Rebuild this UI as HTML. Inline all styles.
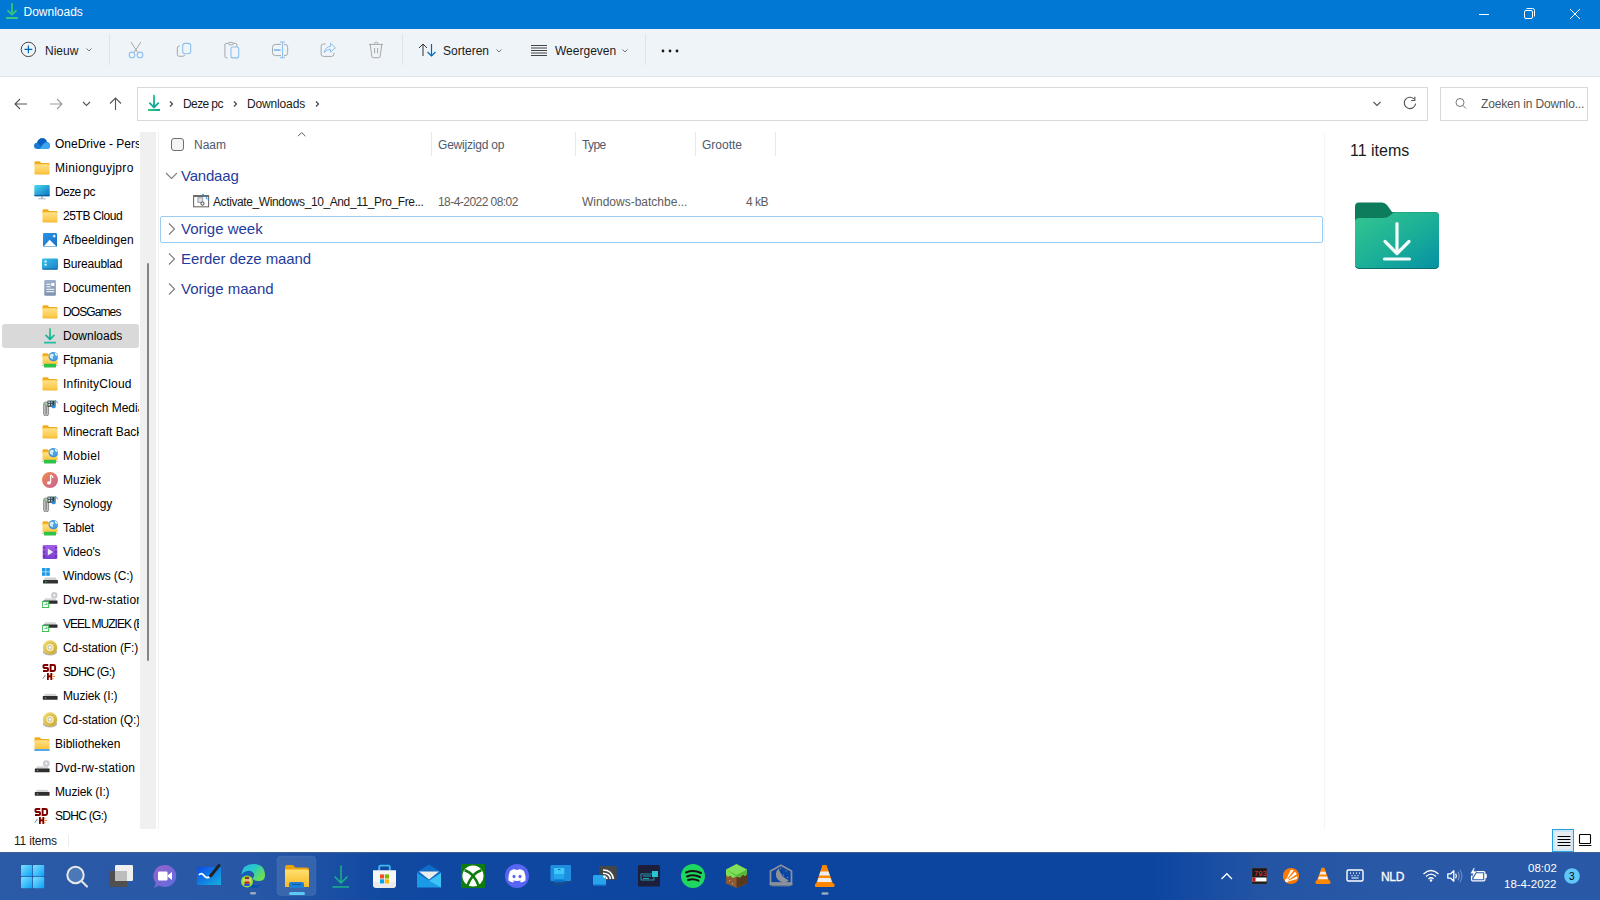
<!DOCTYPE html>
<html><head><meta charset="utf-8">
<style>
*{margin:0;padding:0;box-sizing:border-box}
html,body{width:1600px;height:900px;overflow:hidden;background:#fff;font-family:"Liberation Sans",sans-serif;color:#1a1a1a}
.a{position:absolute}
.t{position:absolute;white-space:nowrap;font-size:12px;line-height:16px}
svg{position:absolute;overflow:visible}
#title{left:0;top:0;width:1600px;height:29px;background:#0078d4}
#tool{left:0;top:29px;width:1600px;height:48px;background:#eff4f9;border-bottom:1px solid #e3e6ea}
.sep{position:absolute;width:1px;background:#dfe3e8}
.side .t{color:#1a1a1a}
</style></head>
<body>
<!-- TITLE BAR -->
<div id="title" class="a"></div>
<svg style="left:0;top:0" width="30" height="28"><path d="M12 3.8 V14.2 M8 10.8 L12 14.6 L16 10.8" stroke="#2fc27e" stroke-width="1.9" stroke-linecap="round" stroke-linejoin="round" fill="none"/><rect x="6" y="17" width="12" height="1.9" rx="0.3" fill="#33c97e"/></svg>
<div class="t" style="left:23.5px;top:4px;color:#fff">Downloads</div>
<svg style="left:1470px;top:0" width="130" height="28" fill="none" stroke="#fff" stroke-width="1">
 <path d="M9 14.5 H19"/>
 <rect x="54.5" y="10.5" width="8" height="8" rx="1.5"/>
 <path d="M56.5 8.5 H62.5 Q64.5 8.5 64.5 10.5 V16.5"/>
 <path d="M100 9 L110 19 M110 9 L100 19"/>
</svg>

<!-- TOOLBAR -->
<div id="tool" class="a"></div>
<svg style="left:0;top:28px" width="110" height="48" fill="none">
 <circle cx="28.4" cy="21.4" r="7.2" stroke="#444" stroke-width="1"/>
 <path d="M28.4 17.5 V25.3 M24.5 21.4 H32.3" stroke="#0067c0" stroke-width="1.2"/>
 <path d="M86.5 20.5 L89 23 L91.5 20.5" stroke="#777" stroke-width="1"/>
</svg>
<div class="t" style="left:45px;top:43px;color:#1a1a1a">Nieuw</div>
<div class="sep" style="left:109px;top:34px;height:31px"></div>
<svg style="left:120px;top:34px" width="280" height="32" fill="none" stroke-width="1">
 <g stroke="#a6a6a6"><path d="M11 8 L17.6 18.3 M20.8 8 L14.2 18.3"/></g>
 <g stroke="#8ec0ec" stroke-width="1.1"><circle cx="12" cy="20.9" r="2.8"/><circle cx="20" cy="20.9" r="2.8"/></g>
 <path d="M59.8 12 H59.3 Q57.3 12 57.3 14 V20.3 Q57.3 22.3 59.3 22.3 H62.3 Q64.5 22.3 64.8 20.8" stroke="#a6a6a6"/>
 <rect x="62.7" y="9.4" width="8" height="10.3" rx="2.5" stroke="#8ec0ec" stroke-width="1.1"/>
 <path d="M107.5 23.9 H106.5 Q104.9 23.9 104.9 22.3 V11 Q104.9 9.3 106.5 9.3 H108.3 M113.2 9.3 H115.2 Q116.9 9.3 116.9 11 V13" stroke="#a6a6a6"/>
 <rect x="108.5" y="8.4" width="4.6" height="2.4" rx="1.2" stroke="#a6a6a6"/>
 <rect x="111" y="13" width="7.7" height="10.9" rx="2" stroke="#8ec0ec" stroke-width="1.1"/>
 <path d="M161 10.4 H155.5 Q152.5 10.4 152.5 13.4 V18.6 Q152.5 21.6 155.5 21.6 H161 M164 10.4 H165 Q167.7 10.4 167.7 13.4 V18.6 Q167.7 21.6 165 21.6 H164" stroke="#a6a6a6"/>
 <path d="M162.5 8 V23.7 M160 8 H165 M160 23.7 H165" stroke="#8ec0ec" stroke-width="1.1"/>
 <rect x="154" y="15.1" width="6.6" height="1.9" fill="#8ec0ec"/>
 <path d="M205.5 10 H203.5 Q201.1 10 201.1 12.5 V20 Q201.1 22.4 203.5 22.4 H211.5 Q213.9 22.4 213.9 20 V18.8" stroke="#a6a6a6"/>
 <path d="M204.2 18.6 Q205.6 12.6 210.5 12.4 V9.2 L215.4 13.8 L210.5 18.3 V15.3 Q206.8 15.2 204.2 18.6 Z" stroke="#8ec0ec" stroke-linejoin="round"/>
 <path d="M249 10.4 H263 M254.5 10.4 V9.5 Q254.5 8.3 255.8 8.3 H256.5 Q257.8 8.3 257.8 9.5 V10.4 M250.2 10.4 L251.8 22.3 Q252 23.7 253.4 23.7 H258.6 Q260 23.7 260.2 22.3 L261.8 10.4 M254.6 14 V19.5 M257.6 14 V19.5" stroke="#a6a6a6"/>
</svg>
<div class="sep" style="left:402px;top:34px;height:31px"></div>
<svg style="left:410px;top:34px" width="240" height="32" fill="none" stroke-width="1">
 <path d="M13 22 V10 M9 14 L13 10 L17 14" stroke="#333"/>
 <path d="M21.5 10 V22 M17.5 18 L21.5 22 L25.5 18" stroke="#0067c0" stroke-width="1.2"/>
 <path d="M86.5 15.5 L89 18 L91.5 15.5" stroke="#777"/>
 <path d="M121 11.5 H137 M121 14 H137 M121 16.5 H137 M121 19 H137 M121 21.5 H137" stroke="#3a3a3a" stroke-width="0.95"/>
 <path d="M212.5 15.5 L215 18 L217.5 15.5" stroke="#777"/>
</svg>
<div class="t" style="left:443px;top:43px">Sorteren</div>
<div class="t" style="left:555px;top:43px">Weergeven</div>
<div class="sep" style="left:645px;top:34px;height:31px"></div>
<svg style="left:660px;top:47px" width="22" height="8" fill="#1a1a1a"><circle cx="3" cy="4" r="1.4"/><circle cx="10" cy="4" r="1.4"/><circle cx="17" cy="4" r="1.4"/></svg>

<!-- NAV / ADDRESS -->
<svg style="left:0;top:80px" width="135" height="40" fill="none" stroke-width="1.1">
 <path d="M15 24 H27 M20 19 L15 24 L20 29" stroke="#555"/>
 <path d="M50 24 H62 M57 19 L62 24 L57 29" stroke="#999"/>
 <path d="M83 22 L86.5 25.5 L90 22" stroke="#555"/>
 <path d="M115.5 30 V18 M110 23.5 L115.5 18 L121 23.5" stroke="#555"/>
</svg>
<div class="a" style="left:137px;top:87px;width:1291px;height:34px;border:1px solid #d9d9d9"></div>
<svg style="left:140px;top:87px" width="190" height="34" fill="none" stroke-width="1.2">
 <defs><linearGradient id="gDl2" gradientUnits="userSpaceOnUse" x1="0" y1="8" x2="0" y2="21"><stop offset="0" stop-color="#2ecc82"/><stop offset="1" stop-color="#0e9ea0"/></linearGradient><linearGradient id="gDl3" x1="0" y1="0" x2="1" y2="0"><stop offset="0" stop-color="#30cc80"/><stop offset="1" stop-color="#10a29c"/></linearGradient></defs>
 <path d="M14 8.6 V19.8 M9.8 16.2 L14 20.4 L18.2 16.2" stroke="url(#gDl2)" stroke-width="1.9" stroke-linecap="round" stroke-linejoin="round"/><rect x="8" y="22" width="12" height="1.9" rx="0.3" fill="url(#gDl3)" stroke="none"/>
 <path d="M30 14.5 L32.5 17 L30 19.5" stroke="#444"/>
 <path d="M94 14.5 L96.5 17 L94 19.5" stroke="#444"/>
 <path d="M176 14.5 L178.5 17 L176 19.5" stroke="#444"/>
</svg>
<div class="t" style="left:183px;top:96px;letter-spacing:-0.6px">Deze pc</div>
<div class="t" style="left:247px;top:96px;letter-spacing:-0.15px">Downloads</div>
<svg style="left:1360px;top:87px" width="70" height="34" fill="none" stroke-width="1.1">
 <path d="M13.5 15 L17 18.5 L20.5 15" stroke="#555"/>
 <path d="M55.6 16.6 A5.7 5.7 0 1 1 53.9 11.8" stroke="#555" stroke-width="1.1"/><path d="M54.8 9.8 V13.5 H51.2" stroke="#555" stroke-width="1.2" stroke-linejoin="miter"/>
</svg>
<div class="a" style="left:1440px;top:87px;width:148px;height:34px;border:1px solid #d9d9d9"></div>
<svg style="left:1440px;top:87px" width="40" height="34" fill="none" stroke="#777" stroke-width="1"><circle cx="20" cy="15.5" r="4"/><path d="M23 18.5 L26 21.5"/></svg>
<div class="t" style="left:1481px;top:96px;color:#555;letter-spacing:-0.15px">Zoeken in Downlo...</div>

<!-- SIDEBAR -->
<svg width="0" height="0" style="position:absolute">
<defs>
<linearGradient id="gFold" x1="0" y1="0" x2="0" y2="1"><stop offset="0" stop-color="#ffe38a"/><stop offset="1" stop-color="#fcc23b"/></linearGradient>
<linearGradient id="gMon" x1="0" y1="0" x2="1" y2="1"><stop offset="0" stop-color="#4adcef"/><stop offset="1" stop-color="#0a6fc2"/></linearGradient>
<linearGradient id="gDesk" x1="0" y1="0" x2="1" y2="1"><stop offset="0" stop-color="#35c4ee"/><stop offset="1" stop-color="#1a7fc8"/></linearGradient>
<linearGradient id="gPic" x1="0" y1="0" x2="1" y2="1"><stop offset="0" stop-color="#2b93e4"/><stop offset="1" stop-color="#1670c8"/></linearGradient>
<linearGradient id="gDoc" x1="0" y1="0" x2="0" y2="1"><stop offset="0" stop-color="#9db0c9"/><stop offset="1" stop-color="#7d91ae"/></linearGradient>
<linearGradient id="gMus" x1="0" y1="0" x2="1" y2="1"><stop offset="0" stop-color="#f08a4a"/><stop offset="1" stop-color="#c7609a"/></linearGradient>
<linearGradient id="gVid" x1="0" y1="0" x2="0" y2="1"><stop offset="0" stop-color="#a35ee8"/><stop offset="1" stop-color="#7a3fd0"/></linearGradient>
<linearGradient id="gDl" x1="0" y1="0" x2="0" y2="1"><stop offset="0" stop-color="#2fc887"/><stop offset="1" stop-color="#13b09a"/></linearGradient>
<linearGradient id="gCd" x1="0" y1="0" x2="1" y2="1"><stop offset="0" stop-color="#f3e37a"/><stop offset="1" stop-color="#c9a227"/></linearGradient>
<symbol id="i-folder" viewBox="0 0 16 16"><path d="M0.5 2.3 Q0.5 1.3 1.5 1.3 H5.6 L7.2 3 H14.5 Q15.5 3 15.5 4 V6 H0.5 Z" fill="#f1ad1e"/><path d="M0.5 4.2 H14.5 Q15.5 4.2 15.5 5.2 V13.3 Q15.5 14.3 14.5 14.3 H1.5 Q0.5 14.3 0.5 13.3 Z" fill="url(#gFold)"/><rect x="0.5" y="13.6" width="15" height="0.7" fill="#f0b32e"/></symbol>
<symbol id="i-lib" viewBox="0 0 16 16"><path d="M0.5 2.3 Q0.5 1.3 1.5 1.3 H5.6 L7.2 3 H14.5 Q15.5 3 15.5 4 V6 H0.5 Z" fill="#f1ad1e"/><path d="M0.5 4.2 H14.5 Q15.5 4.2 15.5 5.2 V13 H0.5 Z" fill="url(#gFold)"/><rect x="0.2" y="13.3" width="15.6" height="1.4" rx="0.6" fill="#1b8fe0"/></symbol>
<symbol id="i-cloud" viewBox="0 0 16 16"><path d="M3.8 13 Q0 13 0 9.8 Q0.1 7 3.1 6.8 Q4.2 2.2 8.6 2.3 Q12.2 2.5 13 6.1 Q16 6.5 16 9.7 Q15.9 13 12.6 13 Z" fill="#1a78d6"/><path d="M5.6 13 L9.6 7.9 Q11.4 6.1 13.4 6.5 Q16 7.1 16 9.9 Q15.9 13 12.6 13 Z" fill="#3ea6f0"/><path d="M3.1 6.8 Q4.2 2.2 8.6 2.3 Q11.6 2.5 12.7 5.6 Q10.4 5.7 9 7.4 L6 11 Q5.4 7.4 3.1 6.8 Z" fill="#0b5fc0"/></symbol>
<symbol id="i-pc" viewBox="0 0 16 16"><rect x="0.3" y="0.9" width="15.4" height="11.3" rx="1" fill="url(#gMon)"/><rect x="0.3" y="11.2" width="15.4" height="1" fill="#0b4f8f"/><rect x="7.2" y="12.2" width="1.6" height="2.3" fill="#9aa7b3"/><rect x="4.2" y="14.3" width="7.6" height="1" fill="#a9b4bf"/></symbol>
<symbol id="i-pic" viewBox="0 0 16 16"><rect x="1" y="1" width="14" height="14" rx="1.2" fill="url(#gPic)"/><path d="M1.6 14.4 L7.5 7.8 L14.6 14.4 Z" fill="#fff"/><path d="M12.2 2.6 V5.6 M10.7 4.1 H13.7" stroke="#fff" stroke-width="1"/></symbol>
<symbol id="i-desk" viewBox="0 0 16 16"><rect x="0" y="2.4" width="16" height="11" rx="1.3" fill="url(#gDesk)"/><rect x="0.5" y="12.6" width="15" height="1" fill="#0d5d98"/><rect x="2.6" y="4.6" width="2" height="1.8" fill="#fff"/><rect x="2.6" y="7.8" width="2" height="1.8" fill="#fff"/></symbol>
<symbol id="i-doc" viewBox="0 0 16 16"><rect x="2.3" y="0" width="11.6" height="15.7" rx="1.2" fill="url(#gDoc)"/><rect x="4.3" y="3.8" width="4.2" height="1" fill="#fff"/><rect x="9.3" y="3" width="3" height="3" fill="#fff"/><rect x="4.3" y="6.3" width="4.2" height="1" fill="#fff"/><rect x="4.3" y="8.8" width="8" height="1" fill="#fff"/><rect x="4.3" y="11.2" width="8" height="1" fill="#fff"/></symbol>
<symbol id="i-dl" viewBox="0 0 16 16"><path d="M8 1 V11 M4 7.4 L8 11.4 L12 7.4" stroke="url(#gDl)" stroke-width="1.8" stroke-linecap="round" stroke-linejoin="round" fill="none"/><rect x="2" y="13.8" width="12" height="1.8" rx="0.3" fill="#22c0a0"/></symbol>
<symbol id="i-net" viewBox="0 0 16 16"><path d="M0.5 2.3 Q0.5 1.3 1.5 1.3 H5.6 L7.2 3 H14.5 Q15.5 3 15.5 4 V6 H0.5 Z" fill="#f1ad1e"/><path d="M0.5 4.2 H15.5 V12.5 H0.5 Z" fill="url(#gFold)"/><rect x="0" y="13" width="16" height="0.8" fill="#b8bcc4"/><rect x="2" y="11.8" width="12" height="3.6" rx="0.5" fill="#2fc24a"/><circle cx="11.3" cy="4.6" r="4.7" fill="#4ba3e3"/><path d="M8.4 2.6 Q10 1.2 11.4 2.2 Q12.6 3.4 11 4.6 Q10.2 5.6 10.8 7.4 Q8.4 6.6 7.6 5 Q7.5 3.6 8.4 2.6 Z M12.8 0.6 Q15.2 1.6 15.8 4 Q14 4.2 13.2 3 Q12.6 1.8 12.8 0.6 Z" fill="#d8ecfa"/><path d="M7 5 A4.7 4.7 0 0 0 15.8 6" stroke="#2a78c0" stroke-width="0.6" fill="none"/></symbol>
<symbol id="i-remote" viewBox="0 0 16 16"><rect x="1.6" y="2" width="5" height="14" rx="2.3" fill="#c4c4c4" stroke="#6a6a6a" stroke-width="0.7"/><rect x="3.4" y="5" width="1.5" height="9.5" rx="0.7" fill="#8a8a8a"/><rect x="5.5" y="0.6" width="7.2" height="6.2" fill="#3a3a3a"/><rect x="6.3" y="1.4" width="1.7" height="1.7" fill="#9be8ff"/><rect x="8.8" y="1.4" width="1.7" height="1.7" fill="#5cc5f0"/><rect x="6.3" y="3.9" width="1.7" height="1.7" fill="#aef0c0"/><rect x="8.8" y="3.9" width="1.7" height="1.7" fill="#5cc5f0"/><path d="M13.3 0.4 V6.6" stroke="#2a8fe0" stroke-width="1"/><path d="M13.3 0.4 Q15.2 1.3 15.6 3.4" stroke="#2a8fe0" stroke-width="0.9" fill="none"/><ellipse cx="11.6" cy="6.8" rx="2.1" ry="1.5" fill="#2a8fe0"/><rect x="2.4" y="4" width="1.3" height="1.3" fill="#3c3"/></symbol>
<symbol id="i-music" viewBox="0 0 16 16"><circle cx="8" cy="8" r="8" fill="url(#gMus)"/><path d="M8.6 3.2 V10.5" stroke="#fff" stroke-width="1.3"/><path d="M8.6 3.2 Q10.8 3.8 11 6" stroke="#fff" stroke-width="1.2" fill="none"/><ellipse cx="6.9" cy="10.9" rx="2" ry="1.6" fill="#fff"/></symbol>
<symbol id="i-vid" viewBox="0 0 16 16"><rect x="0.7" y="1" width="14.6" height="14" rx="1.3" fill="url(#gVid)"/><rect x="1.5" y="3" width="1.3" height="1.3" fill="#3b1d6e"/><rect x="1.5" y="7.3" width="1.3" height="1.3" fill="#3b1d6e"/><rect x="1.5" y="11.5" width="1.3" height="1.3" fill="#3b1d6e"/><rect x="13.2" y="3" width="1.3" height="1.3" fill="#3b1d6e"/><rect x="13.2" y="7.3" width="1.3" height="1.3" fill="#3b1d6e"/><rect x="13.2" y="11.5" width="1.3" height="1.3" fill="#3b1d6e"/><path d="M5.8 4.5 L11.2 8 L5.8 11.5 Z" fill="#eee"/></symbol>
<symbol id="i-win" viewBox="0 0 16 16"><rect x="0" y="0" width="3.6" height="3.6" fill="#1e9be8"/><rect x="4.2" y="0" width="3.6" height="3.6" fill="#1e9be8"/><rect x="0" y="4.2" width="3.6" height="3.6" fill="#1e9be8"/><rect x="4.2" y="4.2" width="3.6" height="3.6" fill="#1e9be8"/><path d="M1.5 12.2 L3 9.5 H13.5 L15.2 12.2 Z" fill="#d0d0d0"/><rect x="1" y="12" width="15" height="3.6" rx="0.6" fill="#333"/><rect x="3.2" y="13.2" width="1.3" height="1.2" fill="#3c3"/></symbol>
<symbol id="i-dvdnet" viewBox="0 0 16 16"><circle cx="12.3" cy="3.2" r="3.2" fill="#c8ccd0"/><circle cx="12.3" cy="3.2" r="1" fill="#fff"/><path d="M1.5 8.8 L3.3 6.2 H13.2 L15 8.8 Z" fill="#d5d5d5"/><rect x="1.3" y="8.6" width="14.2" height="3.2" rx="0.5" fill="#2e2e2e"/><rect x="0.3" y="9.6" width="6.4" height="6" fill="#fff" stroke="#2eb84a" stroke-width="1"/><path d="M2 13.8 Q2.4 11.6 4.5 11.4 V10.6 L5.8 12 L4.5 13.3 V12.5 Q3 12.5 2 13.8 Z" fill="#2eb84a"/></symbol>
<symbol id="i-drvnet" viewBox="0 0 16 16"><path d="M1.5 8.8 L3.3 6.2 H13.2 L15 8.8 Z" fill="#d5d5d5"/><rect x="1.3" y="8.6" width="14.2" height="3.2" rx="0.5" fill="#2e2e2e"/><rect x="0.3" y="9.6" width="6.4" height="6" fill="#fff" stroke="#2eb84a" stroke-width="1"/><path d="M2 13.8 Q2.4 11.6 4.5 11.4 V10.6 L5.8 12 L4.5 13.3 V12.5 Q3 12.5 2 13.8 Z" fill="#2eb84a"/></symbol>
<symbol id="i-cd" viewBox="0 0 16 16"><ellipse cx="8" cy="12" rx="7.2" ry="3.4" fill="#b8b8b8"/><circle cx="8" cy="7.5" r="7.2" fill="url(#gCd)"/><circle cx="8" cy="7.5" r="4.2" fill="#f6eeb0" stroke="#caa83a" stroke-width="0.6"/><circle cx="8" cy="7.5" r="1.8" fill="#fff" stroke="#999" stroke-width="0.6"/></symbol>
<symbol id="i-sd" viewBox="0 0 16 16"><path d="M6.2 1 H2.4 Q1.5 1 1.5 2 V3.2 Q1.5 4 2.4 4 H5.2 Q6 4 6 4.8 V6.2 Q6 7 5.2 7 H1" stroke="#7d0000" stroke-width="1.9" fill="none"/><path d="M8.6 0.1 V8 M8.6 1 H11.6 Q13.1 1 13.1 2.5 V5.5 Q13.1 7 11.6 7 H8.6" stroke="#7d0000" stroke-width="1.9" fill="none"/><rect x="6.2" y="10" width="2.5" height="3.5" fill="#d8d050"/><path d="M5.9 9 V16 M9.3 9 V16 M5.9 12.3 H9.3" stroke="#7d0000" stroke-width="1.8"/><path d="M3 11.5 L1.7 13 L3.8 13.5 Z" fill="#d8d860"/><path d="M0.7 14.8 L3.5 10.8" stroke="#6a80b8" stroke-width="0.9"/><path d="M10.3 12.4 H13.2 M10.3 10.5 L11.6 10.2 M10.3 14.4 L11.6 14.7" stroke="#ff7010" stroke-width="0.9"/></symbol>
<symbol id="i-drv" viewBox="0 0 16 16"><path d="M1.5 8.3 L3.3 5.8 H13.2 L15 8.3 Z" fill="#d5d5d5"/><rect x="0.8" y="8" width="14.8" height="3.8" rx="0.6" fill="#2f2f2f"/><rect x="3" y="9.4" width="1.3" height="1.1" fill="#3c3"/></symbol>
<symbol id="i-dvd" viewBox="0 0 16 16"><circle cx="12.3" cy="3.6" r="3.4" fill="#c8ccd0"/><circle cx="12.3" cy="3.6" r="1.1" fill="#fff"/><path d="M1.5 8.8 L3.3 6.3 H13.2 L15 8.8 Z" fill="#d5d5d5"/><rect x="0.8" y="8.5" width="14.8" height="3.8" rx="0.6" fill="#2f2f2f"/><rect x="3" y="9.9" width="1.3" height="1.1" fill="#3c3"/></symbol>
</defs></svg>

<div class="a" style="left:0;top:132px;width:139px;height:697px;overflow:hidden;color:#000">
<div class="a" style="left:2px;top:192px;width:137px;height:24px;background:#d9d9d9;border-radius:3px"></div>
<svg style="left:34px;top:4px" width="16" height="16"><use href="#i-cloud"/></svg><div class="t" style="left:55px;top:0px;line-height:24px">OneDrive - Persoonlijk</div>
<svg style="left:34px;top:28px" width="16" height="16"><use href="#i-folder"/></svg><div class="t" style="left:55px;top:24px;line-height:24px;letter-spacing:0.3px">Minionguyjpro</div>
<svg style="left:34px;top:52px" width="16" height="16"><use href="#i-pc"/></svg><div class="t" style="left:55px;top:48px;line-height:24px;letter-spacing:-0.6px">Deze pc</div>
<svg style="left:42px;top:76px" width="16" height="16"><use href="#i-folder"/></svg><div class="t" style="left:63px;top:72px;line-height:24px;letter-spacing:-0.4px">25TB Cloud</div>
<svg style="left:42px;top:100px" width="16" height="16"><use href="#i-pic"/></svg><div class="t" style="left:63px;top:96px;line-height:24px;letter-spacing:0.05px">Afbeeldingen</div>
<svg style="left:42px;top:124px" width="16" height="16"><use href="#i-desk"/></svg><div class="t" style="left:63px;top:120px;line-height:24px;letter-spacing:-0.22px">Bureaublad</div>
<svg style="left:42px;top:148px" width="16" height="16"><use href="#i-doc"/></svg><div class="t" style="left:63px;top:144px;line-height:24px">Documenten</div>
<svg style="left:42px;top:172px" width="16" height="16"><use href="#i-folder"/></svg><div class="t" style="left:63px;top:168px;line-height:24px;letter-spacing:-0.9px">DOSGames</div>
<svg style="left:42px;top:196px" width="16" height="16"><use href="#i-dl"/></svg><div class="t" style="left:63px;top:192px;line-height:24px">Downloads</div>
<svg style="left:42px;top:220px" width="16" height="16"><use href="#i-net"/></svg><div class="t" style="left:63px;top:216px;line-height:24px">Ftpmania</div>
<svg style="left:42px;top:244px" width="16" height="16"><use href="#i-folder"/></svg><div class="t" style="left:63px;top:240px;line-height:24px;letter-spacing:0.2px">InfinityCloud</div>
<svg style="left:42px;top:268px" width="16" height="16"><use href="#i-remote"/></svg><div class="t" style="left:63px;top:264px;line-height:24px">Logitech Media Server</div>
<svg style="left:42px;top:292px" width="16" height="16"><use href="#i-folder"/></svg><div class="t" style="left:63px;top:288px;line-height:24px">Minecraft Backups</div>
<svg style="left:42px;top:316px" width="16" height="16"><use href="#i-net"/></svg><div class="t" style="left:63px;top:312px;line-height:24px;letter-spacing:0.3px">Mobiel</div>
<svg style="left:42px;top:340px" width="16" height="16"><use href="#i-music"/></svg><div class="t" style="left:63px;top:336px;line-height:24px">Muziek</div>
<svg style="left:42px;top:364px" width="16" height="16"><use href="#i-remote"/></svg><div class="t" style="left:63px;top:360px;line-height:24px">Synology</div>
<svg style="left:42px;top:388px" width="16" height="16"><use href="#i-net"/></svg><div class="t" style="left:63px;top:384px;line-height:24px;letter-spacing:-0.2px">Tablet</div>
<svg style="left:42px;top:412px" width="16" height="16"><use href="#i-vid"/></svg><div class="t" style="left:63px;top:408px;line-height:24px;letter-spacing:-0.2px">Video's</div>
<svg style="left:42px;top:436px" width="16" height="16"><use href="#i-win"/></svg><div class="t" style="left:63px;top:432px;line-height:24px;letter-spacing:-0.15px">Windows (C:)</div>
<svg style="left:42px;top:460px" width="16" height="16"><use href="#i-dvdnet"/></svg><div class="t" style="left:63px;top:456px;line-height:24px;letter-spacing:0.2px">Dvd-rw-station (D:)</div>
<svg style="left:42px;top:484px" width="16" height="16"><use href="#i-drvnet"/></svg><div class="t" style="left:63px;top:480px;line-height:24px;letter-spacing:-1.0px">VEEL MUZIEK (E:)</div>
<svg style="left:42px;top:508px" width="16" height="16"><use href="#i-cd"/></svg><div class="t" style="left:63px;top:504px;line-height:24px;letter-spacing:-0.1px">Cd-station (F:)</div>
<svg style="left:42px;top:532px" width="16" height="16"><use href="#i-sd"/></svg><div class="t" style="left:63px;top:528px;line-height:24px;letter-spacing:-0.72px">SDHC (G:)</div>
<svg style="left:42px;top:556px" width="16" height="16"><use href="#i-drv"/></svg><div class="t" style="left:63px;top:552px;line-height:24px;letter-spacing:-0.14px">Muziek (I:)</div>
<svg style="left:42px;top:580px" width="16" height="16"><use href="#i-cd"/></svg><div class="t" style="left:63px;top:576px;line-height:24px;letter-spacing:-0.1px">Cd-station (Q:)</div>
<svg style="left:34px;top:604px" width="16" height="16"><use href="#i-lib"/></svg><div class="t" style="left:55px;top:600px;line-height:24px">Bibliotheken</div>
<svg style="left:34px;top:628px" width="16" height="16"><use href="#i-dvd"/></svg><div class="t" style="left:55px;top:624px;line-height:24px;letter-spacing:0.2px">Dvd-rw-station (D:)</div>
<svg style="left:34px;top:652px" width="16" height="16"><use href="#i-drv"/></svg><div class="t" style="left:55px;top:648px;line-height:24px;letter-spacing:-0.14px">Muziek (I:)</div>
<svg style="left:34px;top:676px" width="16" height="16"><use href="#i-sd"/></svg><div class="t" style="left:55px;top:672px;line-height:24px;letter-spacing:-0.72px">SDHC (G:)</div>
</div>
<div class="a" style="left:140px;top:132px;width:16px;height:697px;background:#f0f0f0"></div>
<div class="a" style="left:147px;top:263px;width:2px;height:398px;background:#858585;border-radius:1px"></div>
<!-- MAIN LIST -->
<div class="a" style="left:158px;top:132px;width:1px;height:697px;background:#f2f2f2"></div>
<svg style="left:158px;top:132px" width="200" height="24" fill="none">
 <rect x="13.5" y="6.5" width="12" height="12" rx="2.5" fill="#f4f4f4" stroke="#6f6f6f" stroke-width="1"/>
 <path d="M140 4.2 L143.7 0.5 L147.4 4.2" stroke="#555" stroke-width="1"/>
</svg>
<div class="t" style="left:194px;top:137px;color:#4c5a6e">Naam</div>
<div class="a" style="left:431px;top:132px;width:1px;height:24px;background:#e8e8e8"></div>
<div class="t" style="left:438px;top:137px;color:#4c5a6e;letter-spacing:-0.2px">Gewijzigd op</div>
<div class="a" style="left:575px;top:132px;width:1px;height:24px;background:#e8e8e8"></div>
<div class="t" style="left:582px;top:137px;color:#4c5a6e;letter-spacing:-0.6px">Type</div>
<div class="a" style="left:695px;top:132px;width:1px;height:24px;background:#e8e8e8"></div>
<div class="t" style="left:702px;top:137px;color:#4c5a6e">Grootte</div>
<div class="a" style="left:775px;top:132px;width:1px;height:24px;background:#e8e8e8"></div>

<svg style="left:158px;top:160px" width="30" height="140" fill="none" stroke="#7d7d7d" stroke-width="1.1">
 <path d="M8 13 L13.5 18.5 L19 13"/>
 <path d="M11 63.5 L16.5 69 L11 74.5"/>
 <path d="M11 93.5 L16.5 99 L11 104.5"/>
 <path d="M11 123.5 L16.5 129 L11 134.5"/>
</svg>
<div class="t" style="left:181px;top:167px;font-size:15px;line-height:18px;color:#1f3c9c;letter-spacing:-0.2px">Vandaag</div>
<svg style="left:193px;top:193px" width="18" height="16">
 <rect x="0.6" y="2.6" width="15" height="11.2" fill="#fff" stroke="#6e6a68" stroke-width="1.1"/>
 <rect x="0.6" y="2.2" width="15" height="1.8" fill="#6e6a68"/>
 <rect x="5" y="4.8" width="4.6" height="4.6" fill="#dfe4e9" stroke="#a2abb4" stroke-width="1.2"/>
 <circle cx="9.5" cy="10.6" r="1.6" fill="#fff" stroke="#5f6368" stroke-width="1.1"/>
 <path d="M9.5 1 L15.5 7" stroke="#2a90e0" stroke-width="1.3" stroke-dasharray="1.6 0.9"/>
</svg>
<div class="t" style="left:213px;top:194px;letter-spacing:-0.4px">Activate_Windows_10_And_11_Pro_Fre...</div>
<div class="t" style="left:438px;top:194px;color:#5d5d5d;letter-spacing:-0.55px">18-4-2022 08:02</div>
<div class="t" style="left:582px;top:194px;color:#5d5d5d">Windows-batchbe...</div>
<div class="t" style="left:746px;top:194px;color:#5d5d5d;letter-spacing:-0.5px">4 kB</div>

<div class="a" style="left:160px;top:216px;width:1163px;height:27px;border:1px solid #99cdf5;border-radius:2px"></div>
<div class="t" style="left:181px;top:219.5px;font-size:15px;line-height:18px;color:#1f3c9c">Vorige week</div>
<div class="t" style="left:181px;top:249.5px;font-size:15px;line-height:18px;color:#1f3c9c;letter-spacing:-0.1px">Eerder deze maand</div>
<div class="t" style="left:181px;top:279.5px;font-size:15px;line-height:18px;color:#1f3c9c">Vorige maand</div>

<!-- DETAILS PANE -->
<div class="a" style="left:1324px;top:132px;width:1px;height:697px;background:#f5f5f5"></div>
<div class="t" style="left:1350px;top:141px;font-size:16px;line-height:20px;color:#1a1a1a">11 items</div>
<svg style="left:1355px;top:202px" width="84" height="67">
 <defs>
  <linearGradient id="gBig" x1="0" y1="0" x2="1" y2="1"><stop offset="0" stop-color="#35c68f"/><stop offset="0.55" stop-color="#1aae98"/><stop offset="1" stop-color="#0690a5"/></linearGradient>
 </defs>
 <path d="M0 4.5 Q0 0.5 4 0.5 H27 Q30 0.5 32 3 L37 10 H80 Q84 10 84 14 V30 H0 Z" fill="#0d7c5c"/>
 <path d="M0 20 Q0 16 4 16 H28 Q32 16 34.5 14 L37.5 11.3 Q38.8 10.2 41 10.2 H80 Q84 10.2 84 14 V62.5 Q84 66.5 80 66.5 H4 Q0 66.5 0 62.5 Z" fill="url(#gBig)"/>
 <path d="M0.5 64 Q1 66.5 4 66.5 H80 Q83 66.5 83.5 64" stroke="#0b6e6e" stroke-width="1" fill="none"/>
 <path d="M42 21.5 V51" stroke="#f4fbfb" stroke-width="3.2" stroke-linecap="round"/>
 <path d="M30 39.5 L42 51.5 L54 39.5" stroke="#f4fbfb" stroke-width="3.2" stroke-linecap="round" stroke-linejoin="round" fill="none"/>
 <path d="M29.5 57 H54.5" stroke="#f4fbfb" stroke-width="3.2" stroke-linecap="round"/>
</svg>

<!-- STATUS BAR -->
<div class="t" style="left:14px;top:833px;color:#1a1a1a;letter-spacing:-0.2px">11 items</div>
<div class="a" style="left:68px;top:835px;width:1px;height:12px;background:#ececec"></div>
<div class="a" style="left:1552px;top:829px;width:22px;height:23px;border:1px solid #29a0e0;background:#cfe7f4"></div>
<div class="a" style="left:1555px;top:832px;width:16px;height:17px;background:#e7eef2"></div>
<svg style="left:1552px;top:829px" width="48" height="23" fill="none" stroke="#000" stroke-width="1.1">
 <path d="M6 7.5 H18 M6 10.5 H18 M6 13.5 H18 M6 16.5 H18" stroke-linecap="round"/>
 <rect x="27.5" y="5.5" width="11" height="9" rx="0.8"/>
 <path d="M27.5 16.5 H39" stroke-linecap="round"/>
</svg>

<!-- TASKBAR -->
<div class="a" style="left:0;top:852px;width:1600px;height:48px;background:linear-gradient(90deg,#2b5ba7 0%,#2757a6 16%,#1149a1 24%,#0b45a0 45%,#0c45a0 72%,#2455a5 79%,#2959a6 88%,#2858a6 100%)"></div>
<div class="a" style="left:0;top:852px;width:1600px;height:1px;background:#3d5f95"></div>
<svg style="left:0;top:852px" width="1600" height="48">
 <defs>
  <linearGradient id="tWin" x1="0" y1="0" x2="1" y2="1"><stop offset="0" stop-color="#7fe0ff"/><stop offset="1" stop-color="#0aa0f5"/></linearGradient>
  <linearGradient id="tMeet" x1="0" y1="0" x2="1" y2="1"><stop offset="0" stop-color="#9b62c9"/><stop offset="1" stop-color="#5a6ee0"/></linearGradient>
  <linearGradient id="tEdge" x1="0" y1="0" x2="1" y2="0.6"><stop offset="0" stop-color="#2cb8ee"/><stop offset="0.5" stop-color="#28c8c8"/><stop offset="1" stop-color="#6ee050"/></linearGradient>
  <linearGradient id="tMail" x1="0" y1="0" x2="1" y2="1"><stop offset="0" stop-color="#2aa8f0"/><stop offset="1" stop-color="#0a78d8"/></linearGradient>
  <linearGradient id="tFold" x1="0" y1="0" x2="0" y2="1"><stop offset="0" stop-color="#ffe070"/><stop offset="1" stop-color="#f7b924"/></linearGradient>
  <linearGradient id="tWb" x1="0" y1="0" x2="1" y2="1"><stop offset="0" stop-color="#0d4ae8"/><stop offset="1" stop-color="#15b0e0"/></linearGradient>
 </defs>
 <!-- start -->
 <rect x="21" y="13" width="11.2" height="11.2" rx="1" fill="url(#tWin)"/>
 <rect x="33" y="13" width="11.2" height="11.2" rx="1" fill="url(#tWin)"/>
 <rect x="21" y="25" width="11.2" height="11.2" rx="1" fill="url(#tWin)"/>
 <rect x="33" y="25" width="11.2" height="11.2" rx="1" fill="url(#tWin)"/>
 <!-- search -->
 <circle cx="75.5" cy="23" r="8.2" fill="#4a78b8" stroke="#e8e8e8" stroke-width="2"/>
 <path d="M81.5 29 L87 34.5" stroke="#e0e0e0" stroke-width="2.2" stroke-linecap="round"/>
 <!-- task view -->
 <rect x="109" y="19" width="18" height="16" rx="1.2" fill="#505050"/>
 <rect x="115" y="13" width="18" height="16" rx="1.2" fill="#f0f0f0"/>
 <rect x="115" y="19" width="12" height="10" fill="#bdbdbd"/>
 <!-- meet -->
 <path d="M165 13 A11.5 11 0 1 1 159 33.5 L154 36 L156 31 A11.5 11 0 0 1 165 13 Z" fill="url(#tMeet)"/>
 <rect x="158" y="19.5" width="9.5" height="9" rx="1.2" fill="#fff"/><path d="M167.5 23.5 L172 20 V28 L167.5 24.5 Z" fill="#fff"/>
 <!-- whiteboard -->
 <rect x="197" y="15" width="24" height="18" fill="url(#tWb)"/>
 <path d="M199 23 Q201.5 20 204 23.5 Q206.5 27 210 24.5" stroke="#fff" stroke-width="1.8" fill="none"/>
 <path d="M210.5 24 L219 13.5" stroke="#222" stroke-width="3" stroke-linecap="round"/>
 <!-- edge -->
 <path d="M241 24.5 Q241 36 253.5 36 Q259 36 261.5 33 Q256 34.5 251.5 31.5 Q247.5 28.5 248 24.5 Q248.5 20.5 252 19.5 Q246 18 241 24.5 Z" fill="#0d62c0"/>
 <path d="M241.2 23 Q242.5 12 253 12 Q265 12 265 23.5 Q265 29 258.5 29 Q254 29 252.5 26.5 Q256 22.5 252.5 20 Q249.5 18 245.5 19.5 Q242.5 20.5 241.2 23 Z" fill="url(#tEdge)"/>
 <path d="M248 28 Q250 33 256 33.5 Q259.5 33.5 261.5 32.5 Q259 35.8 254 36 Q250 36 248 33 Z" fill="#0a4a9c" opacity="0.7"/>
 <circle cx="247" cy="29.5" r="6" fill="#9ae03a"/>
 <path d="M243.2 27 Q247 25.5 250.8 27 V30 H243.2 Z" fill="#e8f060" opacity="0.6"/>
 <rect x="245" y="24.8" width="4" height="2.4" fill="#8a3a20"/><rect x="245.2" y="27" width="3.6" height="2.5" fill="#e8b090"/><rect x="244.6" y="29.5" width="4.8" height="2.3" fill="#d02020"/><rect x="244.3" y="31.8" width="5.4" height="2.2" fill="#2850d8"/>
 <rect x="250" y="40" width="6" height="2.6" rx="1.3" fill="#9aa8c0"/>
 <!-- explorer active -->
 <rect x="277" y="4" width="39" height="39.5" rx="4" fill="#ffffff" fill-opacity="0.11" stroke="#ffffff" stroke-opacity="0.06"/>
 <path d="M285 15 Q285 13 287 13 H293 L295.5 15.5 H307 Q309 15.5 309 17.5 V20 H285 Z" fill="#e9a10e"/>
 <path d="M285 17.5 H307 Q309 17.5 309 19.5 V35 H285 Z" fill="url(#tFold)"/>
 <path d="M289 36 V32 Q289 30 291 30 H302 Q304 30 304 32 V36 Z" fill="#1c7fd6"/>
 <rect x="292" y="32" width="9" height="1" fill="#0a5aa8"/>
 <rect x="289" y="40" width="16" height="3" rx="1.5" fill="#5cc8f5"/>
 <!-- download -->
 <path d="M341 13.5 V31 M334.5 24.5 L341 31 L347.5 24.5" stroke="#1bb389" stroke-width="1.5" fill="none"/>
 <rect x="332.5" y="34.2" width="16.5" height="1.5" fill="#1bb389"/>
 <!-- store -->
 <path d="M379.2 18.5 V15 Q379.2 13.6 380.6 13.6 H388.4 Q389.8 13.6 389.8 15 V18.5" stroke="#3cb8f4" stroke-width="1.9" fill="none"/>
 <path d="M373 18.3 H396 V32.5 Q396 36 392.5 36 H376.5 Q373 36 373 32.5 Z" fill="#f6f6f6"/>
 <path d="M373 30 H396 V32.5 Q396 36 392.5 36 H376.5 Q373 36 373 32.5 Z" fill="#e4e4e4" opacity="0.6"/>
 <rect x="380" y="22.4" width="4.1" height="4.1" fill="#f25022"/><rect x="384.9" y="22.4" width="4.1" height="4.1" fill="#7fba00"/><rect x="380" y="27.3" width="4.1" height="4.1" fill="#00a4ef"/><rect x="384.9" y="27.3" width="4.1" height="4.1" fill="#ffb900"/>
 <!-- mail -->
 <path d="M417 20 L429 12.5 L441 20 V35 H417 Z" fill="#0f6cc8"/>
 <path d="M419 19.5 H439 L429 27.5 Z" fill="#ececec"/>
 <path d="M417 21 L429 28.8 L441 21 V35.5 H417 Z" fill="#1b9ae8"/>
 <path d="M429 28.8 L441 21 V35.5 Z" fill="#3cc4f5"/>
 <!-- xbox -->
 <rect x="461" y="12" width="24" height="24" rx="1" fill="#107c10"/>
 <circle cx="473" cy="24" r="10.6" fill="#fff"/>
 <path d="M464.6 18.2 Q469.5 19.5 473 23.8 Q476.8 28.5 478.8 34" stroke="#107c10" stroke-width="2.6" fill="none"/>
 <path d="M481.4 18.2 Q476.5 19.5 473 23.8 Q469.2 28.5 467.2 34" stroke="#107c10" stroke-width="2.6" fill="none"/>
 <!-- discord -->
 <circle cx="517" cy="24" r="12" fill="#5865f2"/>
 <path d="M510 19 Q513 17 515 17 L515.5 18 Q517 17.7 518.5 18 L519 17 Q521 17 524 19 Q526 23.5 525.5 28.5 Q523.5 30 521 30.5 L520 29 Q521 28.6 522 28 Q517 30 512 28 Q513 28.6 514 29 L513 30.5 Q510.5 30 508.5 28.5 Q508 23.5 510 19 Z" fill="#fff"/>
 <ellipse cx="514" cy="24.5" rx="1.5" ry="1.7" fill="#5865f2"/><ellipse cx="520" cy="24.5" rx="1.5" ry="1.7" fill="#5865f2"/>
 <!-- phone link -->
 <rect x="550.5" y="13" width="20.5" height="16" rx="1" fill="#1f8de0"/>
 <rect x="549.5" y="29" width="23" height="1.3" fill="#1a4f8c"/>
 <rect x="554" y="16" width="10.3" height="6" fill="#3ec8fa"/>
 <rect x="554" y="22" width="10.3" height="5.5" fill="#22a6ee"/>
 <rect x="554" y="27.5" width="10.3" height="3" fill="#0b74cc"/>
 <rect x="554" y="30.5" width="10.3" height="2.5" fill="#1a4a88"/>
 <rect x="558" y="17" width="2.4" height="0.9" fill="#0d5aa0"/>
 <!-- remote/cast -->
 <rect x="599" y="14" width="17.8" height="13.8" rx="1" fill="#454545"/>
 <path d="M603 18 Q612 18 613.5 27 M603 21.3 Q609.5 21.3 610.5 27 M603.5 24.5 Q606.5 24.5 607.2 27" stroke="#fff" stroke-width="1.6" fill="none"/>
 <rect x="593" y="23" width="13" height="11" rx="1.2" fill="#27a4ec"/>
 <rect x="593" y="32.5" width="13" height="1.5" fill="#0f6fc8"/>
 <circle cx="604.5" cy="24.8" r="1.2" fill="#fff"/>
 <!-- dark app -->
 <rect x="638" y="13" width="22" height="21.5" rx="1.5" fill="#1d1f3a"/>
 <rect x="641" y="22" width="13" height="6" fill="none" stroke="#27c5d0" stroke-width="0.7"/>
 <rect x="652" y="19" width="6" height="6" fill="#27c5d0"/>
 <path d="M643 24 H651 M643 26.5 H649" stroke="#27c5d0" stroke-width="0.8"/>
 <!-- spotify -->
 <circle cx="693" cy="24" r="12" fill="#1ed760"/>
 <path d="M686 20.5 Q693.5 17.5 701 21 M687 24.5 Q693.5 22 700 25 M688 28 Q693.5 26.3 698.5 28.7" stroke="#191414" stroke-width="2" stroke-linecap="round" fill="none"/>
 <!-- minecraft -->
 <path d="M736.5 12 L747 17.5 V31.5 L736.5 36 L726 31.5 V17.5 Z" fill="#8a5a34"/>
 <path d="M736.5 23 L747 17.5 V31.5 L736.5 36 Z" fill="#5a3a1e"/>
 <path d="M736.5 12 L747 17.5 V22 L745 24 L743 22.5 L740 25.5 L736.5 24.5 L733 26 L730 23.5 L728 25 L726 23 V17.5 Z" fill="#7ee05a"/>
 <path d="M726 17.5 L736.5 23 L747 17.5 V22 L745 24 L743 22.5 L740 25.5 L736.5 24.5 Z" fill="#56b83a"/>
 <rect x="729" y="28" width="1.2" height="1.2" fill="#c9a07a"/><rect x="732" y="31" width="1.2" height="1.2" fill="#c9a07a"/><rect x="741" y="29" width="1.2" height="1.2" fill="#3a2a18"/>
 <!-- moon -->
 <path d="M781 13.3 L791.5 19 V31 H770.5 V19 Z" fill="none" stroke="#8c929c" stroke-width="1.7" stroke-linejoin="round"/>
 <path d="M778.6 16.6 A7.6 7.6 0 1 0 788.8 28.4 A18 18 0 0 1 778.6 16.6 Z" fill="#8e939b"/>
 <rect x="769.5" y="30.5" width="23" height="3" rx="1" fill="#8c929c"/>
 <rect x="771.5" y="33" width="19" height="1.5" rx="0.7" fill="#7b8290" opacity="0.7"/>
 <circle cx="780.5" cy="16.5" r="0.5" fill="#b0b4ba"/><circle cx="786" cy="19" r="0.5" fill="#b0b4ba"/><circle cx="783.5" cy="23" r="0.5" fill="#b0b4ba"/><circle cx="787.5" cy="25.5" r="0.5" fill="#b0b4ba"/>
 <!-- vlc -->
 <path d="M822.5 13 H826.5 L833 32 H816 Z" fill="#ff8800"/>
 <path d="M820.5 19.5 H828.5 L829.8 23.5 H819.2 Z" fill="#eee"/>
 <path d="M818.5 26 H830.5 L831.8 30 H817.2 Z" fill="#eee"/>
 <rect x="815" y="31.5" width="19.5" height="3.5" rx="1" fill="#ff8800"/>
 <rect x="821.5" y="40.3" width="7" height="2.5" rx="1.2" fill="#9aa8c0"/>

 <!-- tray -->
 <path d="M1221.5 27 L1226.8 21.7 L1232 27" stroke="#fff" stroke-width="1.3" fill="none"/>
 <rect x="1252" y="16" width="15" height="16" fill="#1a1a1a"/>
 <rect x="1252" y="16" width="15" height="16" fill="none" stroke="#555" stroke-width="0.5"/>
 <text x="1254" y="23.5" font-family="Liberation Mono" font-size="7" fill="#ff3030">793</text>
 <rect x="1252.5" y="25.5" width="14" height="4" fill="#fff"/><rect x="1252.5" y="25.5" width="3" height="4" fill="#cc1010"/>
 <circle cx="1291" cy="24" r="8.1" fill="#ff7a00"/>
 <path d="M1285.2 29.6 L1290.6 18.2 Q1292.2 17.4 1293.6 18.4 Z" fill="#fff"/>
 <path d="M1285.6 29.8 L1294.8 19.8 Q1296.2 20.6 1296.6 22.2 Z" fill="#fff"/>
 <path d="M1286 30 L1297.2 24.2 Q1297.6 25.6 1297 27 Z" fill="#fff"/>
 <circle cx="1286.8" cy="28.6" r="1.8" fill="#fff"/>
 <path d="M1321.6 15.8 H1324.4 L1329.2 29 H1316.8 Z" fill="#ff8800"/>
 <path d="M1320.6 19.8 H1325.4 L1326.3 22.4 H1319.7 Z" fill="#f0f0f0"/>
 <path d="M1318.9 24.6 H1327.1 L1328 27.2 H1318 Z" fill="#f0f0f0"/>
 <rect x="1315.6" y="28.6" width="14.8" height="3.4" rx="0.8" fill="#ff8800"/>
 <rect x="1347" y="18" width="16" height="11" rx="1.5" fill="none" stroke="#fff" stroke-width="1.4"/>
 <path d="M1350 21.2 H1351 M1353 21.2 H1354 M1356 21.2 H1357 M1359 21.2 H1360 M1351.5 23.6 H1352.5 M1354.5 23.6 H1355.5 M1357.5 23.6 H1358.5 M1351.5 26 H1358.5" stroke="#fff" stroke-width="1.2"/>
 <!-- wifi -->
 <path d="M1423.5 22 Q1431 15 1438.5 22" stroke="#fff" stroke-width="1.3" fill="none"/>
 <path d="M1426 24.5 Q1431 19.8 1436 24.5" stroke="#fff" stroke-width="1.3" fill="none"/>
 <path d="M1428.5 27 Q1431 24.6 1433.5 27" stroke="#fff" stroke-width="1.3" fill="none"/>
 <circle cx="1431" cy="28.5" r="1.2" fill="#fff"/>
 <!-- volume -->
 <path d="M1447.8 21.8 H1450.8 L1453.8 18.8 V29.2 L1450.8 26.2 H1447.8 Z" stroke="#fff" stroke-width="1.3" fill="none" stroke-linejoin="round"/>
 <path d="M1455.6 21.6 Q1457.2 24 1455.6 26.4" stroke="#fff" stroke-width="1.2" fill="none"/>
 <path d="M1457.8 19.8 Q1460.6 24 1457.8 28.2" stroke="#7d9ccc" stroke-width="1.1" fill="none"/>
 <path d="M1459.8 17.8 Q1464 24 1459.8 30.2" stroke="#6a8cc4" stroke-width="1.1" fill="none"/>
 <!-- battery -->
 <path d="M1476.5 19.6 H1483.6 Q1484.9 19.6 1484.9 20.9 V27.6 Q1484.9 28.9 1483.6 28.9 H1472.5 Q1471.6 28.9 1471.6 27.6 V23.5" stroke="#fff" stroke-width="1.3" fill="none"/>
 <path d="M1476.5 21.2 H1483.2 V27.2 H1473.4 L1473.6 26 Z" fill="#fff"/>
 <rect x="1485" y="22" width="1.8" height="4" rx="0.6" fill="#fff"/>
 <path d="M1474.2 15.8 L1470.8 21.2 H1473.4 L1472.5 25.2 L1476.2 19.6 H1473.6 Z" fill="#fff" stroke="#fff" stroke-width="0.4" stroke-linejoin="round"/>
 <!-- badge -->
 <circle cx="1572" cy="24" r="7.8" fill="#60c8f8"/>
</svg>
<div class="t" style="left:1381px;top:869px;color:#fff;font-size:12px;line-height:16px;letter-spacing:-0.3px;-webkit-text-stroke:0.3px #fff">NLD</div>
<div class="t" style="left:1528px;top:860px;color:#fff;font-size:11.5px;line-height:16px">08:02</div>
<div class="t" style="left:1504px;top:876px;color:#fff;font-size:11.5px;line-height:16px">18-4-2022</div>
<div class="t" style="left:1569px;top:870.5px;color:#000;font-size:10px;line-height:12px">3</div>

</body></html>
